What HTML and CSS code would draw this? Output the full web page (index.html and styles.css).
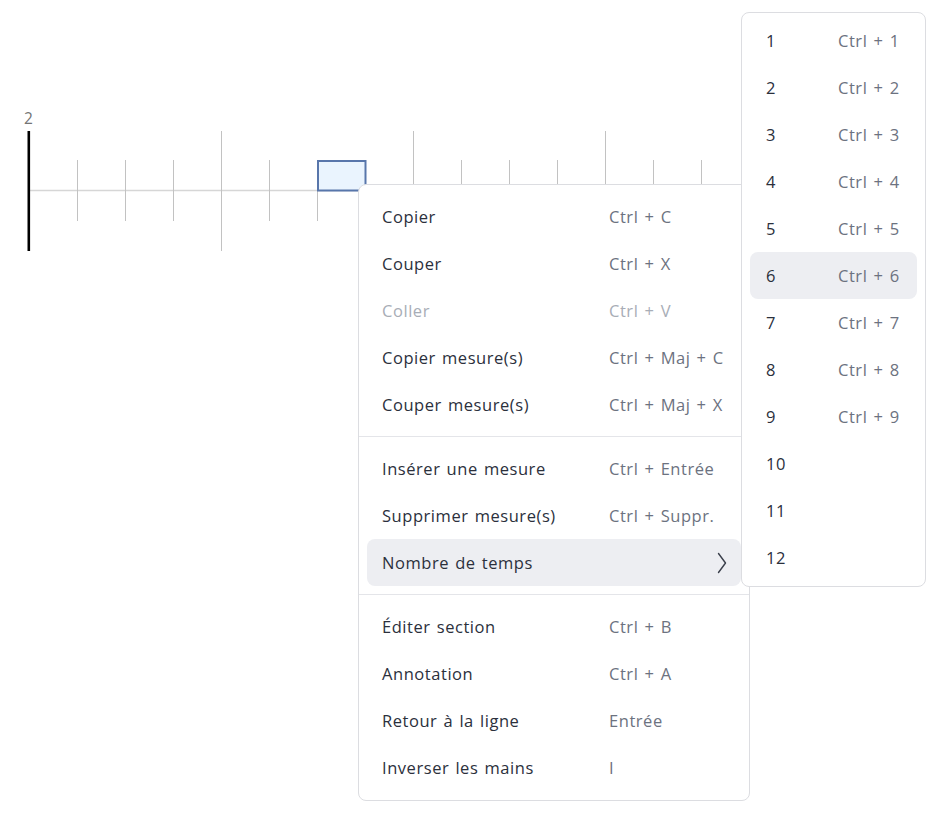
FILE: index.html
```html
<!DOCTYPE html>
<html lang="fr">
<head>
<meta charset="utf-8">
<title>Menu contextuel</title>
<link rel="stylesheet" href="styles.css">
</head>
<body>
<div class="editor">
  <div class="measure-num">2</div>
  <svg class="staff" width="760" height="122" viewBox="0 131 760 122" xmlns="http://www.w3.org/2000/svg">
    <line x1="29" y1="190.5" x2="760" y2="190.5" stroke="#d6d6d6" stroke-width="1.5"/>
    <g stroke="#c2c2c2" stroke-width="1">
      <line x1="77.5" y1="160" x2="77.5" y2="221"/>
      <line x1="125.5" y1="160" x2="125.5" y2="221"/>
      <line x1="173.5" y1="160" x2="173.5" y2="221"/>
      <line x1="221.5" y1="131" x2="221.5" y2="251"/>
      <line x1="269.5" y1="160" x2="269.5" y2="221"/>
      <line x1="317.5" y1="160" x2="317.5" y2="221"/>
      <line x1="365.5" y1="160" x2="365.5" y2="221"/>
      <line x1="413.5" y1="131" x2="413.5" y2="251"/>
      <line x1="461.5" y1="160" x2="461.5" y2="221"/>
      <line x1="509.5" y1="160" x2="509.5" y2="221"/>
      <line x1="557.5" y1="160" x2="557.5" y2="221"/>
      <line x1="605.5" y1="131" x2="605.5" y2="251"/>
      <line x1="653.5" y1="160" x2="653.5" y2="221"/>
      <line x1="701.5" y1="160" x2="701.5" y2="221"/>
    </g>
    <line x1="28.8" y1="131" x2="28.8" y2="251" stroke="#000" stroke-width="2.6"/>
    <rect x="318" y="161" width="47.5" height="29.5" fill="#eaf4fe" stroke="#5876ab" stroke-width="2"/>
  </svg>
</div>

<div class="menu context">
  <div class="group">
    <div class="item"><span class="label">Copier</span><span class="key">Ctrl + C</span></div>
    <div class="item"><span class="label">Couper</span><span class="key">Ctrl + X</span></div>
    <div class="item disabled"><span class="label">Coller</span><span class="key">Ctrl + V</span></div>
    <div class="item"><span class="label">Copier mesure(s)</span><span class="key">Ctrl + Maj + C</span></div>
    <div class="item"><span class="label">Couper mesure(s)</span><span class="key">Ctrl + Maj + X</span></div>
  </div>
  <div class="group">
    <div class="item"><span class="label">Insérer une mesure</span><span class="key">Ctrl + Entrée</span></div>
    <div class="item"><span class="label">Supprimer mesure(s)</span><span class="key">Ctrl + Suppr.</span></div>
    <div class="item active"><span class="label">Nombre de temps</span>
      <svg class="chevron" width="10" height="22" viewBox="0 0 10 22"><path d="M1.5 1.5 L8.5 11 L1.5 20.5" fill="none" stroke="#3a3f4b" stroke-width="1.4" stroke-linecap="round" stroke-linejoin="round"/></svg>
    </div>
  </div>
  <div class="group">
    <div class="item"><span class="label">Éditer section</span><span class="key">Ctrl + B</span></div>
    <div class="item"><span class="label">Annotation</span><span class="key">Ctrl + A</span></div>
    <div class="item"><span class="label">Retour à la ligne</span><span class="key">Entrée</span></div>
    <div class="item"><span class="label">Inverser les mains</span><span class="key">I</span></div>
  </div>
</div>

<div class="menu submenu">
  <div class="sub-item"><span class="num">1</span><span class="key">Ctrl + 1</span></div>
  <div class="sub-item"><span class="num">2</span><span class="key">Ctrl + 2</span></div>
  <div class="sub-item"><span class="num">3</span><span class="key">Ctrl + 3</span></div>
  <div class="sub-item"><span class="num">4</span><span class="key">Ctrl + 4</span></div>
  <div class="sub-item"><span class="num">5</span><span class="key">Ctrl + 5</span></div>
  <div class="sub-item active"><span class="num">6</span><span class="key">Ctrl + 6</span></div>
  <div class="sub-item"><span class="num">7</span><span class="key">Ctrl + 7</span></div>
  <div class="sub-item"><span class="num">8</span><span class="key">Ctrl + 8</span></div>
  <div class="sub-item"><span class="num">9</span><span class="key">Ctrl + 9</span></div>
  <div class="sub-item"><span class="num">10</span></div>
  <div class="sub-item"><span class="num">11</span></div>
  <div class="sub-item"><span class="num">12</span></div>
</div>
</body>
</html>
```

FILE: styles.css
```css
html, body {
  margin: 0;
  padding: 0;
  background: #ffffff;
}

body {
  font-family: "Open Sans", "Lato", "DejaVu Sans", sans-serif;
  color: #2b303c;
  width: 952px;
  height: 819px;
  overflow: hidden;
  position: relative;
}

.editor {
  padding-top: 109px;
}

.measure-num {
  font-size: 15.5px;
  line-height: 18px;
  color: #747474;
  padding-left: 24px;
  height: 22px;
}

.staff {
  display: block;
}

.menu {
  position: absolute;
  box-sizing: border-box;
  background: #ffffff;
  border: 1px solid #dcdde1;
  border-radius: 8px;
  font-size: 16.5px;
  letter-spacing: 0.55px;
  word-spacing: 1.3px;
}

.context {
  left: 358px;
  top: 184px;
  width: 392px;
}

.group {
  padding: 8px;
}

.group + .group {
  border-top: 1px solid #e4e5e9;
}

.group:last-child {
  padding-bottom: 9px;
}

.item {
  display: flex;
  align-items: center;
  height: 47px;
  padding: 0 15px;
  border-radius: 8px;
}

.label {
  width: 227px;
  flex: none;
}

.key {
  color: #6c7280;
}

.item.disabled .label,
.item.disabled .key {
  color: #a8adb6;
}

.item.active,
.sub-item.active {
  background: #edeef2;
}

.chevron {
  margin-left: auto;
  margin-right: -1px;
  display: block;
}

.submenu {
  left: 741px;
  top: 12px;
  width: 185px;
  padding: 4px 8px 5px;
  z-index: 2;
}

.sub-item {
  display: flex;
  align-items: center;
  height: 47px;
  padding: 0 16px;
  border-radius: 8px;
}

.num {
  width: 72px;
  flex: none;
}
```
